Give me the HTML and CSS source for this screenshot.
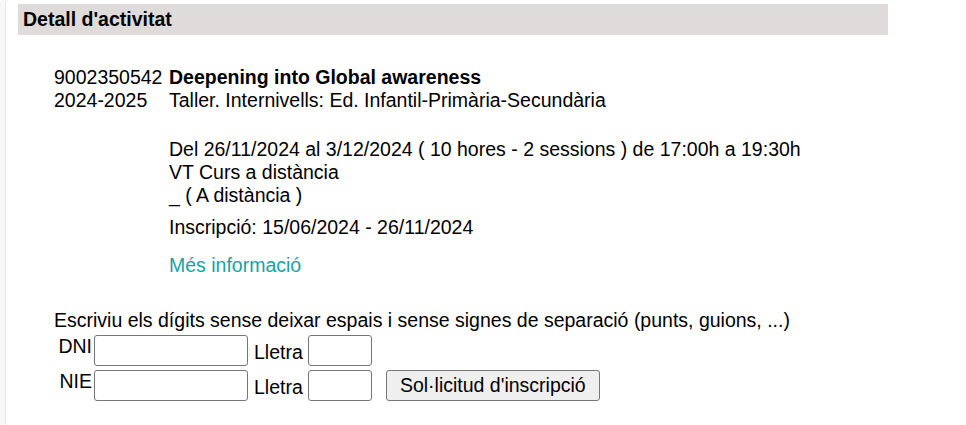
FILE: index.html
```html
<!DOCTYPE html>
<html lang="ca">
<head>
<meta charset="utf-8">
<title>Detall d'activitat</title>
<link rel="stylesheet" href="styles.css">
</head>
<body>
<div class="page">
  <div class="bar"><h1 class="bar-title">Detall d'activitat</h1></div>
  <div class="activity">
    <div class="code">9002350542</div>
    <div class="title">Deepening into Global awareness</div>
    <div class="code">2024-2025</div>
    <div class="type">Taller. Internivells: Ed. Infantil-Primària-Secundària</div>
    <div class="details">
      <div>Del 26/11/2024 al 3/12/2024 ( 10 hores - 2 sessions ) de 17:00h a 19:30h</div>
      <div>VT Curs a distància</div>
      <div>_ ( A distància )</div>
      <div class="inscr">Inscripció: 15/06/2024 - 26/11/2024</div>
      <a class="more" href="#">Més informació</a>
    </div>
  </div>
  <form class="form">
    <div class="hint">Escriviu els dígits sense deixar espais i sense signes de separació (punts, guions, ...)</div>
    <div class="idrow">
      <span class="idlabel">DNI</span>
      <input class="num" type="text">
      <span class="lletra">Lletra</span>
      <input class="letter" type="text">
    </div>
    <div class="idrow">
      <span class="idlabel">NIE</span>
      <input class="num" type="text">
      <span class="lletra">Lletra</span>
      <input class="letter" type="text">
      <button class="submit" type="button">Sol·licitud d'inscripció</button>
    </div>
  </form>
</div>
</body>
</html>
```
FILE: styles.css
```css
html, body {
  margin: 0;
  padding: 0;
  background: #f7f7f7;
}
body {
  font-family: "Liberation Sans", Arial, sans-serif;
  font-size: 19.5px;
  line-height: 23px;
  color: #000;
}
.page {
  margin-left: 5px;
  min-height: 425px;
  box-sizing: border-box;
  background: #fff;
  border-left: 1px solid #e8e8e8;
  border-top-left-radius: 4px;
  padding-top: 4px;
}
.bar {
  margin-left: 12px;
  width: 870px;
  height: 31px;
  background: #e0dbdb;
  display: flex;
  align-items: center;
}
.bar-title {
  margin: 0;
  padding-left: 5px;
  font-size: 19.5px;
  font-weight: bold;
  line-height: 23px;
}
.activity {
  display: grid;
  grid-template-columns: 115px auto;
  margin-top: 31px;
  padding-left: 48px;
}
.title { font-weight: bold; }
.details {
  grid-column: 2;
  margin-top: 26px;
  display: flex;
  flex-direction: column;
  align-items: flex-start;
}
.inscr { margin-top: 9px; }
.more {
  margin-top: 15px;
  color: #17a3a3;
  text-decoration: none;
}
.form {
  margin: 32px 0 0 48px;
}
.idrow {
  display: flex;
  align-items: flex-start;
  margin-top: 3px;
}
.idrow + .idrow { margin-top: 4px; }
.idlabel {
  width: 38px;
  text-align: right;
  margin-right: 2px;
}
.num, .letter {
  box-sizing: border-box;
  height: 31px;
  border: 1px solid #767676;
  border-radius: 3px;
  padding: 1px 3px;
  font: inherit;
  background: #fff;
}
.num { width: 154px; }
.letter { width: 64px; }
.lletra {
  margin: 6px 5px 0 6px;
}
.submit {
  box-sizing: border-box;
  margin-left: 14px;
  height: 31px;
  width: 214px;
  padding: 0;
  border: 1px solid #767676;
  border-radius: 3px;
  background: #efefef;
  font: inherit;
  color: #000;
}
```
